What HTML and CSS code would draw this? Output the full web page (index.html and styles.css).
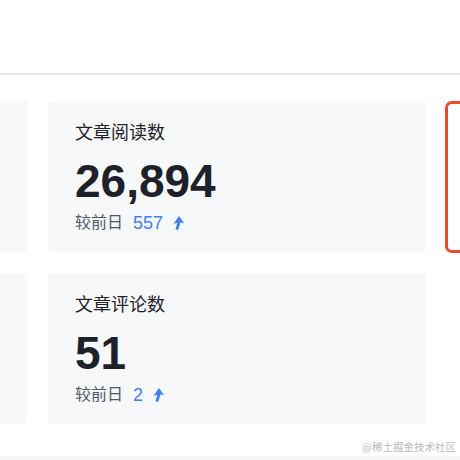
FILE: index.html
```html
<!DOCTYPE html>
<html lang="zh">
<head>
<meta charset="utf-8">
<link rel="stylesheet" href="styles.css">
</head>
<body>
<div class="page">
  <header class="header"></header>
  <main class="grid">
    <div class="card"></div>
    <div class="card">
      <div class="title">文章阅读数</div>
      <div class="value">26,894</div>
      <div class="delta"><span class="label">较前日</span><span class="num">557</span>
        <svg class="arrow" viewBox="0 0 12 14"><path d="M6.9 0 L12.2 7.4 Q10 6.3 8.5 6.5 Q7.4 10.2 6.1 14 L3.4 13.3 Q4.5 10 5.3 6.8 Q3.3 7.2 1.2 8.4 Z"/></svg>
      </div>
    </div>
    <div class="highlight"></div>
    <div class="card"></div>
    <div class="card">
      <div class="title">文章评论数</div>
      <div class="value">51</div>
      <div class="delta"><span class="label">较前日</span><span class="num">2</span>
        <svg class="arrow" viewBox="0 0 12 14"><path d="M6.9 0 L12.2 7.4 Q10 6.3 8.5 6.5 Q7.4 10.2 6.1 14 L3.4 13.3 Q4.5 10 5.3 6.8 Q3.3 7.2 1.2 8.4 Z"/></svg>
      </div>
    </div>
    <div class="empty"></div>
  </main>
  <div class="footer">
    <span class="watermark">@稀土掘金技术社区</span>
  </div>
  <div class="strip"></div>
</div>
</body>
</html>
```
FILE: styles.css
```css
html, body {
  margin: 0;
  padding: 0;
  width: 460px;
  height: 460px;
  overflow: hidden;
  background: #ffffff;
}
.page {
  width: 460px;
  height: 460px;
  display: flex;
  flex-direction: column;
  font-family: "Liberation Sans", "Noto Sans CJK SC", sans-serif;
}
.header {
  height: 73px;
  flex-shrink: 0;
  border-bottom: 2px solid #e6e7ec;
}
.grid {
  margin-top: 26px;
  margin-left: -351px;
  display: grid;
  grid-template-columns: 378px 378px 378px;
  grid-template-rows: 151px 151px;
  gap: 21px;
  flex-shrink: 0;
}
.card {
  background: #f7f8fa;
  border-radius: 3px;
  padding: 19px 26px 0 27px;
  box-sizing: border-box;
}
.title {
  font-size: 18px;
  line-height: 26px;
  color: #1d2129;
}
.value {
  margin-top: 12px;
  font-size: 46px;
  line-height: 46px;
  font-weight: bold;
  color: #1d2129;
}
.delta {
  margin-top: 7px;
  display: flex;
  align-items: center;
  height: 24px;
}
.label {
  font-size: 16px;
  color: #4e5969;
  line-height: 24px;
}
.num {
  margin-left: 10px;
  font-size: 18px;
  color: #3f7ff6;
  line-height: 24px;
}
.arrow {
  width: 12px;
  height: 14px;
  margin-left: 9px;
  fill: #3f7ff6;
}
.highlight {
  margin-left: -2px;
  height: 146px;
  border: 3px solid #ea4a2e;
  border-radius: 7px;
  background: #ffffff;
}
.footer {
  flex: 1;
  display: flex;
  justify-content: flex-end;
  align-items: flex-end;
  padding-right: 4px;
}
.watermark {
  font-family: "Noto Sans CJK SC", sans-serif;
  font-size: 10.5px;
  line-height: 14px;
  color: #b9b9be;
  margin-bottom: 2px;
}
.strip {
  height: 4px;
  background: #f5f5f7;
  flex-shrink: 0;
}
```
